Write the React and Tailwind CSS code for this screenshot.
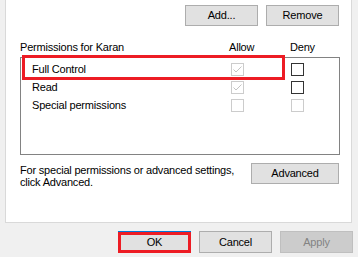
import React from "react";

const font = { fontFamily: '"Liberation Sans", Arial, sans-serif' };

function Check({ checked, disabled }) {
  return (
    <div
      className={
        "w-[13px] h-[13px] shrink-0 border bg-white flex items-center justify-center " +
        (disabled ? "border-[#cccccc]" : "border-[#333333]")
      }
    >
      {checked && (
        <svg width="11" height="11" viewBox="0 0 11 11">
          <polyline
            points="1.5,5.5 4,8 9.5,2.5"
            fill="none"
            stroke="#c4c4c4"
            strokeWidth="1"
          />
        </svg>
      )}
    </div>
  );
}

function Btn({ children, className = "", disabled = false, focus = false }) {
  const tone = disabled
    ? "bg-[#cccccc] border-[#bfbfbf] text-[#838383]"
    : focus
    ? "bg-[#e1e1e1] border-[#0078d7] text-black"
    : "bg-[#e1e1e1] border-[#adadad] text-black";
  return (
    <div
      className={
        "shrink-0 border flex items-center justify-center text-[11px] " + tone + " " + className
      }
    >
      {children}
    </div>
  );
}

function Row({ label, allow, allowDisabled, denyDisabled }) {
  return (
    <div className="flex items-center h-[18px]">
      <div className="w-[210px] shrink-0 pl-[11px] text-[11px] text-black leading-none">{label}</div>
      <Check checked={allow} disabled={allowDisabled} />
      <div className="w-[47px] shrink-0" />
      <Check disabled={denyDisabled} />
    </div>
  );
}

export default function App() {
  return (
    <div className="w-[358px] h-[257px] bg-[#f0f0f0] overflow-hidden tracking-[-0.2px]" style={font}>
      <div className="ml-[5px] w-[347px] h-[223px] bg-white border-l border-r border-b border-[#d9d9d9] pl-[14px] pt-[5px]">
        <div className="w-[319px] flex justify-end gap-[8px]">
          <Btn className="w-[73px] h-[21px]">Add...</Btn>
          <Btn className="w-[73px] h-[21px]">Remove</Btn>
        </div>
        <div className="mt-[13px] h-[16px] flex items-center text-[11px] text-black">
          <div className="w-[209px] shrink-0">Permissions for Karan</div>
          <div className="w-[61px] shrink-0">Allow</div>
          <div>Deny</div>
        </div>
        <div className="relative mt-[2px] w-[320px] h-[98px] border border-[#828282] pt-[2px]">
          <Row label="Full Control" allow allowDisabled />
          <Row label="Read" allow allowDisabled />
          <Row label="Special permissions" allowDisabled denyDisabled />
          <div className="absolute left-[1px] top-[-3px] w-[263px] h-[25px] border-[3px] border-[#ed1c24]" />
        </div>
        <div className="mt-[8px] w-[319px] flex justify-between">
          <div className="text-[11px] leading-[12px] text-black pt-[1px] whitespace-nowrap">
            For special permissions or advanced settings,
            <br />
            click Advanced.
          </div>
          <Btn className="w-[88px] h-[21px]">Advanced</Btn>
        </div>
      </div>
      <div className="mt-[8px] flex pl-[118px] gap-[8px]">
        <div className="relative">
          <Btn focus className="w-[73px] h-[22px]">OK</Btn>
          <div className="absolute left-0 top-[1px] w-[73px] h-[21px] border-[3px] border-[#ed1c24]" />
        </div>
        <Btn className="w-[73px] h-[22px]">Cancel</Btn>
        <Btn disabled className="w-[73px] h-[22px]">Apply</Btn>
      </div>
    </div>
  );
}
